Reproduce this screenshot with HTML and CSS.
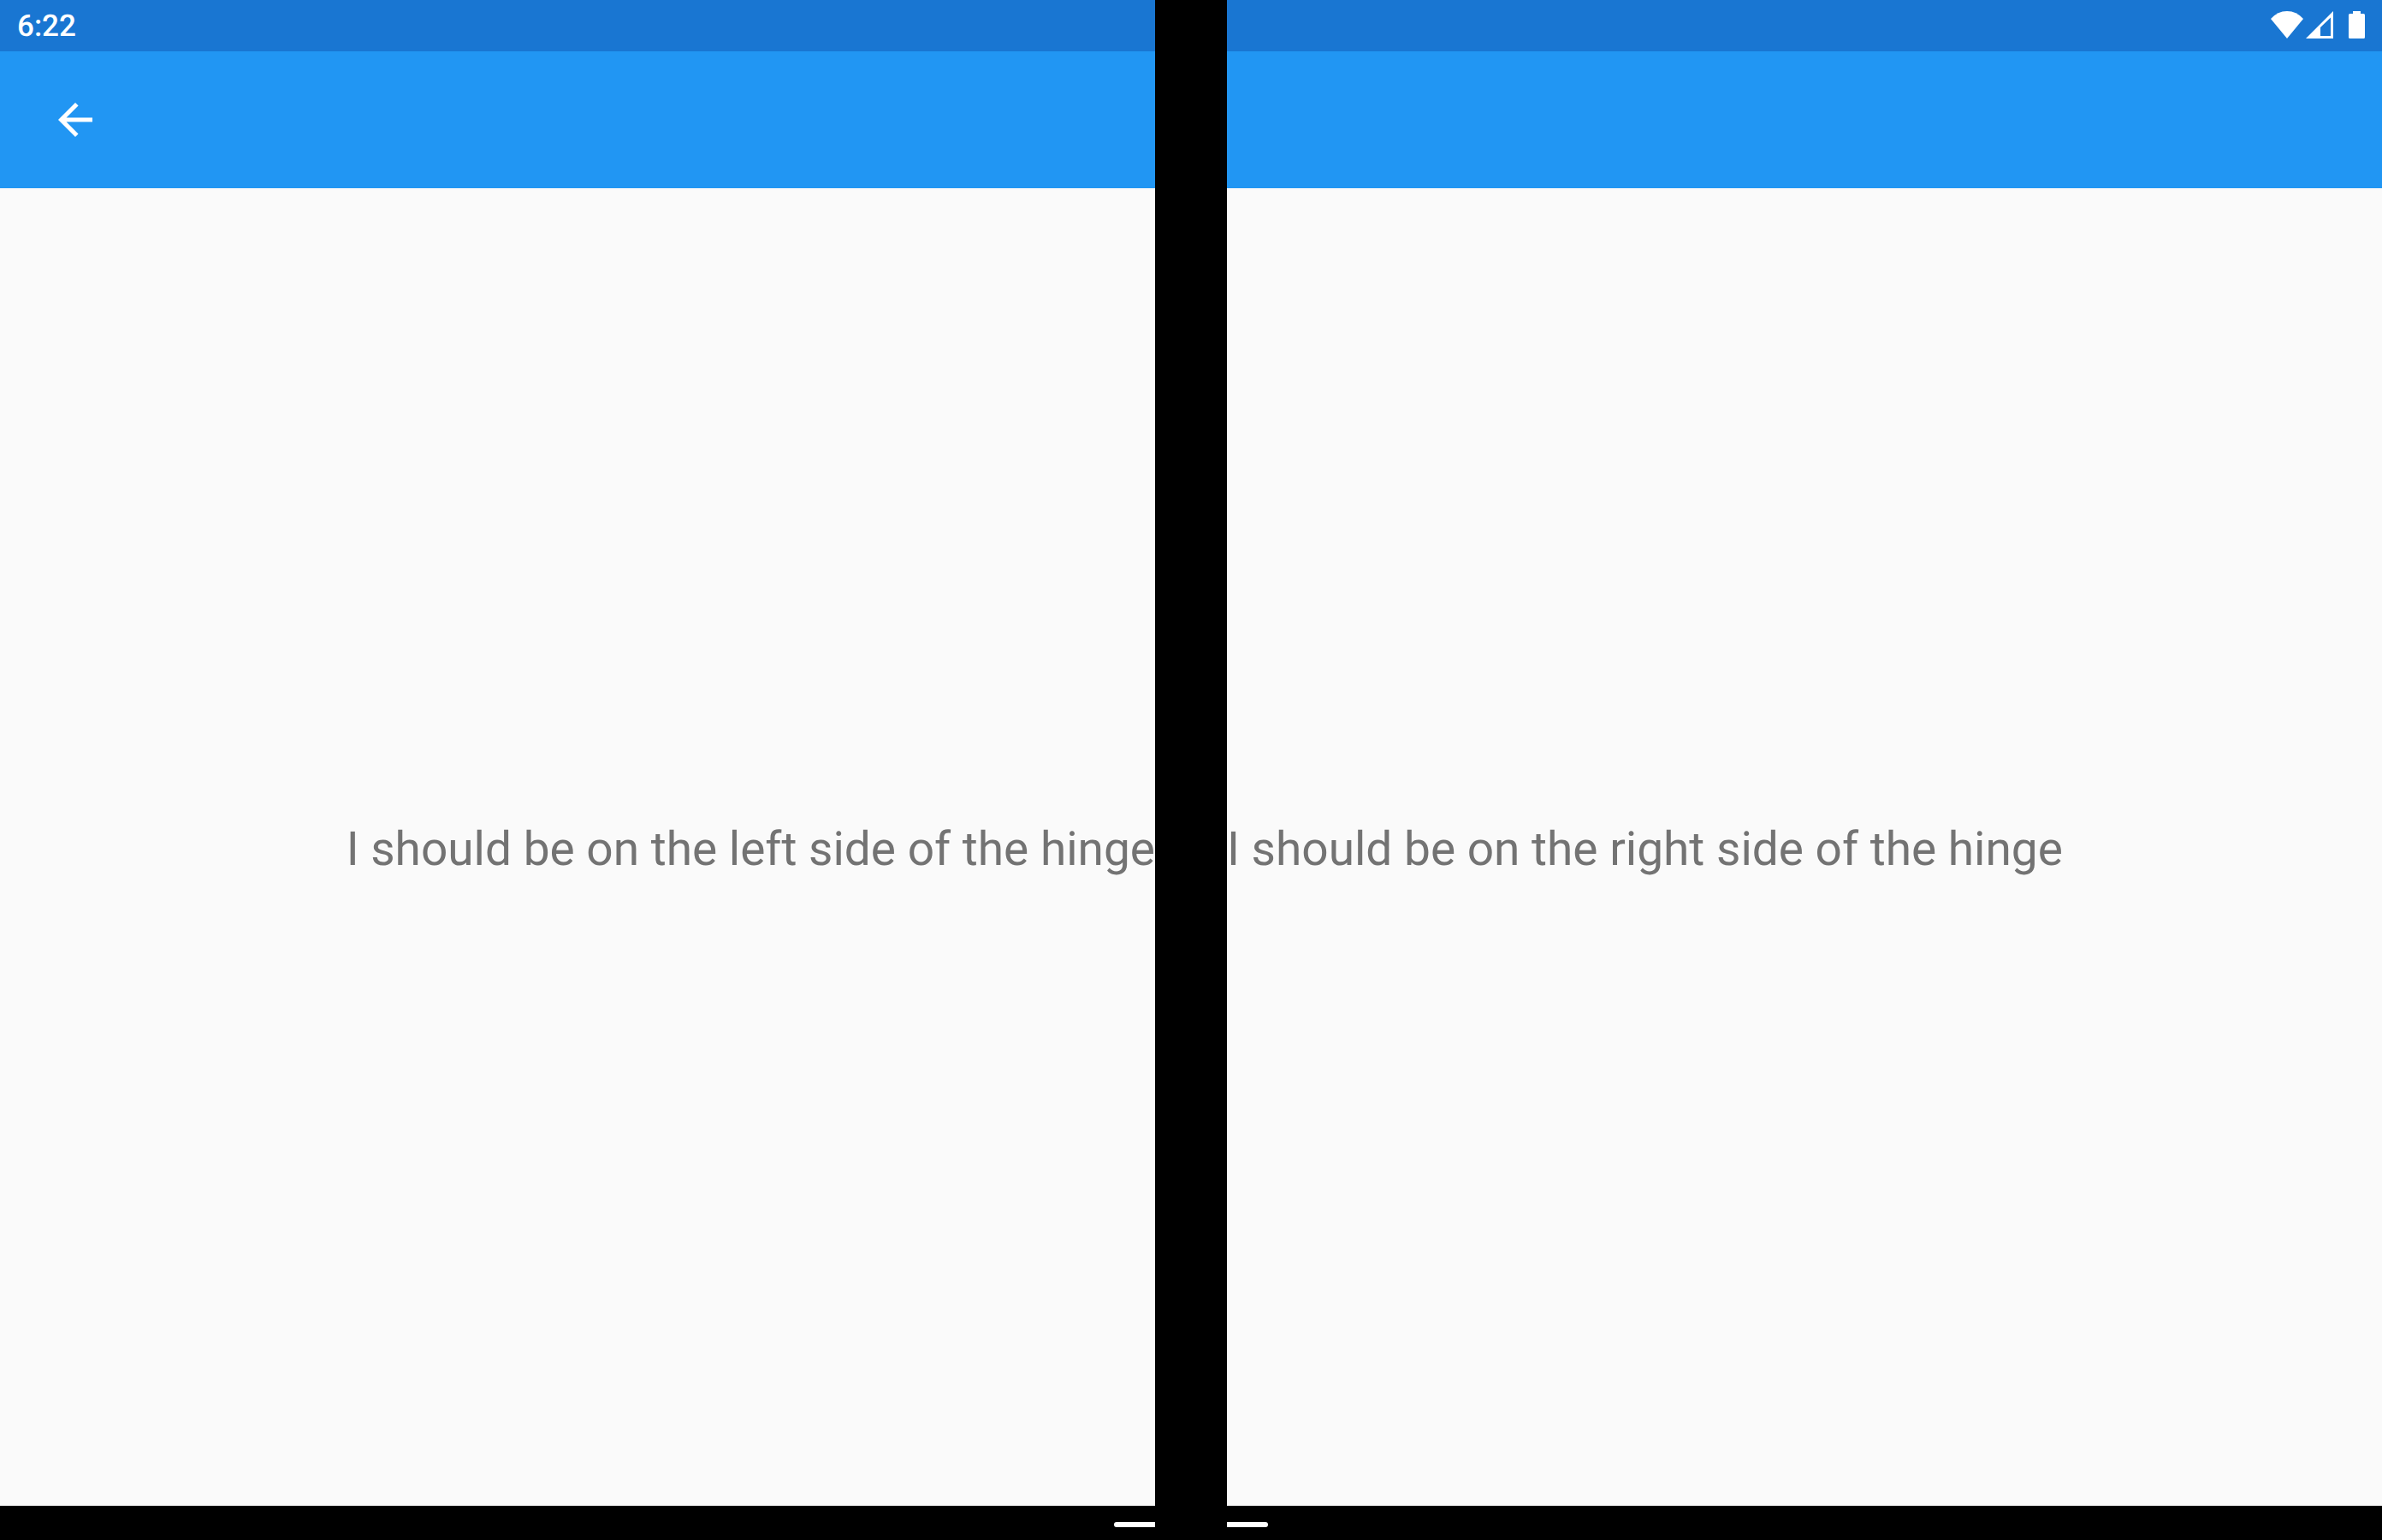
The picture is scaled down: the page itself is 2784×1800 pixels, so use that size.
FILE: index.html
```html
<!DOCTYPE html>
<html lang="en">
<head>
<meta charset="utf-8">
<meta name="viewport" content="width=device-width, initial-scale=1">
<title>Dual screen</title>
<link rel="stylesheet" href="styles.css">
</head>
<body>
<div class="device">
  <section class="screen">
    <div class="status-bar"><time class="clock">6:22</time></div>
    <header class="app-bar">
      <button class="back" type="button" aria-label="Back">
        <svg class="back-icon" viewBox="0 0 24 24" aria-hidden="true"><path d="M20 11H7.83l5.59-5.59L12 4l-8 8 8 8 1.41-1.41L7.83 13H20z"/></svg>
      </button>
    </header>
    <main class="content content-left"><p class="message">I should be on the left side of the hinge</p></main>
    <div class="nav-bar nav-left"><span class="handle handle-left"></span></div>
  </section>
  <div class="hinge"></div>
  <section class="screen">
    <div class="status-bar status-icons">
      <svg class="wifi" viewBox="0 0 38 32" aria-hidden="true"><path d="M0 9Q8 0 19 0T38 9L19 32Z"/></svg>
      <svg class="signal" viewBox="0 0 32 32" aria-hidden="true"><path fill-rule="evenodd" d="M0 32L32 0V32ZM17 19V29H29V7.500Z"/></svg>
      <svg class="battery" viewBox="0 0 19 32" aria-hidden="true"><path d="M5 0H14V3H17.500Q19 3 19 4.500V30.500Q19 32 17.500 32H1.500Q0 32 0 30.500V4.500Q0 3 1.500 3H5Z"/></svg>
    </div>
    <div class="app-bar"></div>
    <div class="content"><p class="message">I should be on the right side of the hinge</p></div>
    <div class="nav-bar"><span class="handle handle-right"></span></div>
  </section>
</div>
</body>
</html>
```
FILE: styles.css
```css
* { box-sizing: border-box; }

body {
  margin: 0;
  background: #000;
  font-family: Roboto, "Liberation Sans", sans-serif;
  text-rendering: geometricPrecision;
}

.device {
  display: grid;
  grid-template-columns: 1fr 84px 1fr;
  min-height: 100vh;
}

.screen {
  display: flex;
  flex-direction: column;
  min-width: 0;
}

.hinge { background: #000; }

.status-bar {
  display: flex;
  align-items: center;
  height: 60px;
  padding: 0 20px;
  background: #1976d2;
  color: #fff;
}

.clock {
  padding-top: 2px;
  font-size: 35px;
  font-weight: 500;
  line-height: 40px;
}

.status-icons {
  justify-content: flex-end;
  padding-bottom: 2px;
}

.status-icons svg {
  height: 32px;
  fill: currentColor;
}

.wifi { width: 38px; }
.signal { width: 32px; margin-left: 3px; }
.battery { width: 19px; margin-left: 18px; }

.app-bar {
  display: flex;
  align-items: center;
  height: 160px;
  padding: 0 58px;
  background: #2196f3;
}

.back {
  display: flex;
  padding: 0;
  border: 0;
  background: none;
  color: #fff;
}

.back-icon {
  width: 60px;
  height: 60px;
  fill: currentColor;
}

.content {
  display: flex;
  flex: 1;
  align-items: center;
  padding-top: 6px;
  background: #fafafa;
}

.content-left { justify-content: flex-end; }

.message {
  margin: 0;
  color: #737373;
  font-size: 55px;
  line-height: 64px;
}

.nav-bar {
  display: flex;
  align-items: center;
  height: 40px;
  padding-top: 4px;
  background: #000;
}

.nav-left { justify-content: flex-end; }

.handle {
  width: 48px;
  height: 6px;
  background: #fff;
}

.handle-left { border-radius: 3px 0 0 3px; }
.handle-right { border-radius: 0 3px 3px 0; }
```
